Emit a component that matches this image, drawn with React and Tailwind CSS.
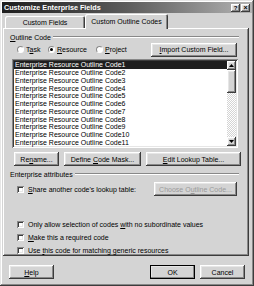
import React from 'react'

const raised = 'shadow-[inset_-1px_-1px_#3c3c3c,inset_1px_1px_#ffffff,inset_-2px_-2px_#888888,inset_2px_2px_#e6e6e6]'
const sunken = 'shadow-[inset_1px_1px_#888888,inset_-1px_-1px_#ffffff,inset_2px_2px_#3c3c3c,inset_-2px_-2px_#e6e6e6]'

function Btn({ children, className = '', disabled = false, bold = false }) {
  return (
    <div
      className={`h-[14px] flex items-center justify-center bg-[#d4d4d4] ${raised} ${
        disabled ? 'text-[#9a9a9a]' : 'text-black'
      } ${bold ? 'outline outline-1 outline-black -outline-offset-1' : ''} ${className}`}
    >
      <span>{children}</span>
    </div>
  )
}

function Radio({ checked, children, className = '' }) {
  return (
    <div className={`flex items-center gap-[2px] ${className}`}>
      <div className="w-[7px] h-[7px] rounded-full bg-white border border-[#8a8a8a] border-r-white border-b-white flex items-center justify-center">
        {checked && <div className="w-[3px] h-[3px] rounded-full bg-black" />}
      </div>
      <span>{children}</span>
    </div>
  )
}

function Check({ children, className = '' }) {
  return (
    <div className={`flex items-center gap-[4px] ${className}`}>
      <div className={`w-[7px] h-[7px] bg-white ${sunken}`} />
      <span>{children}</span>
    </div>
  )
}

function Section({ label }) {
  return (
    <div className="h-[8px] flex items-center gap-[2px]">
      <span>{label}</span>
      <div className="flex-1 h-[2px] border-t border-t-[#888888] border-b border-b-white" />
    </div>
  )
}

const codes = Array.from({ length: 11 }, (_, i) => `Enterprise Resource Outline Code${i + 1}`)

export default function App() {
  return (
    <div className="w-[254px] h-[286px] bg-[#d4d4d4] font-['Liberation_Sans',Arial,sans-serif] text-[7px] leading-none text-black flex flex-col shadow-[inset_-1px_-1px_#3c3c3c,inset_1px_1px_#e6e6e6,inset_-2px_-2px_#888888,inset_2px_2px_#ffffff] overflow-hidden">
      {/* Title bar */}
      <div className="mx-[2px] mt-[2px] h-[11px] bg-gradient-to-r from-[#1e1e1e] via-[#5c5c5c] to-[#b4b4b4] flex items-center justify-between pl-[2px] pr-[2px]">
        <span className="text-white font-bold text-[7.2px]">Customize Enterprise Fields</span>
        <div className="flex gap-[1px]">
          <div className={`w-[9px] h-[8px] bg-[#d4d4d4] ${raised} flex items-center justify-center font-bold text-[6px]`}>?</div>
          <div className={`w-[9px] h-[8px] bg-[#d4d4d4] ${raised} flex items-center justify-center font-bold text-[7px]`}>×</div>
        </div>
      </div>

      {/* Tabs */}
      <div className="mt-[1px] h-[14px] flex items-end pl-[5px] relative z-10">
        <div className="w-[80px] h-[12px] flex items-center justify-center bg-[#d4d4d4] shadow-[inset_1px_1px_#ffffff,inset_-1px_0_#3c3c3c,inset_-2px_0_#888888] rounded-t-[2px]">
          Custom Fields
        </div>
        <div className="w-[83px] h-[15px] -mb-[1px] flex items-center justify-center bg-[#d4d4d4] shadow-[inset_1px_1px_#ffffff,inset_-1px_0_#3c3c3c,inset_-2px_0_#888888] rounded-t-[2px]">
          Custom Outline Codes
        </div>
      </div>

      {/* Panel */}
      <div className="mx-[3px] w-[246px] h-[228px] flex flex-col px-[7px] shadow-[inset_-1px_-1px_#3c3c3c,inset_1px_1px_#ffffff,inset_-2px_-2px_#888888]">
        <div className="mt-[5px] mr-[3px]">
          <Section label={<><u>O</u>utline Code</>} />
        </div>

        <div className="mt-[1px] h-[15px] flex items-center">
          <Radio className="ml-[7px] w-[31px]">T<u>a</u>sk</Radio>
          <Radio checked className="w-[48px]"><u>R</u>esource</Radio>
          <Radio><u>P</u>roject</Radio>
          <Btn className="ml-auto w-[86px] mr-[5px]"><u>I</u>mport Custom Field...</Btn>
        </div>

        <div className={`mt-[2px] ml-[2px] mr-[4px] h-[89px] bg-white ${sunken} p-[2px] flex`}>
          <div className="flex-1 flex flex-col">
            {codes.map((c, i) => (
              <div
                key={c}
                className={`h-[7.75px] flex items-center pl-[1px] ${i === 0 ? 'bg-[#1e1e1e] text-white' : ''}`}
              >
                {c}
              </div>
            ))}
          </div>
          <div className="w-[9px] flex flex-col bg-[repeating-conic-gradient(#d4d4d4_0_25%,#ffffff_0_50%)] bg-[length:2px_2px]">
            <div className={`h-[9px] bg-[#d4d4d4] ${raised} flex items-center justify-center`}>
              <svg width="5" height="3" viewBox="0 0 5 3"><path d="M2.5 0L5 3H0z" fill="#000" /></svg>
            </div>
            <div className={`h-[23px] bg-[#d4d4d4] ${raised}`} />
            <div className="flex-1" />
            <div className={`h-[9px] bg-[#d4d4d4] ${raised} flex items-center justify-center`}>
              <svg width="5" height="3" viewBox="0 0 5 3"><path d="M0 0H5L2.5 3z" fill="#000" /></svg>
            </div>
          </div>
        </div>

        <div className="mt-[4px] ml-[4px] flex gap-[5px]">
          <Btn className="w-[45px]">Re<u>n</u>ame...</Btn>
          <Btn className="w-[77px]">Define <u>C</u>ode Mask...</Btn>
          <Btn className="w-[95px]"><u>E</u>dit Lookup Table...</Btn>
        </div>

        <div className="mt-[4px] mr-[3px]">
          <Section label="Enterprise attributes" />
        </div>

        <div className="mt-[4px] h-[14px] flex items-center">
          <Check className="ml-[7px]"><u>S</u>hare another code's lookup table:</Check>
          <Btn disabled className="ml-auto w-[83px] mr-[5px]">Choose O<u>u</u>tline Code...</Btn>
        </div>

        <div className="mt-[22px] flex flex-col gap-[1px]">
          <Check className="ml-[7px] h-[12px]">Only allow selection of codes <u>w</u>ith no subordinate values</Check>
          <Check className="ml-[7px] h-[12px]"><u>M</u>ake this a required code</Check>
          <Check className="ml-[7px] h-[12px]">Use <u>t</u>his code for matching generic resources</Check>
        </div>
      </div>

      {/* Bottom buttons */}
      <div className="mt-[9px] flex px-[9px]">
        <Btn className="w-[45px]"><u>H</u>elp</Btn>
        <Btn bold className="ml-auto w-[45px]">OK</Btn>
        <Btn className="ml-[5px] w-[45px]">Cancel</Btn>
      </div>
    </div>
  )
}
